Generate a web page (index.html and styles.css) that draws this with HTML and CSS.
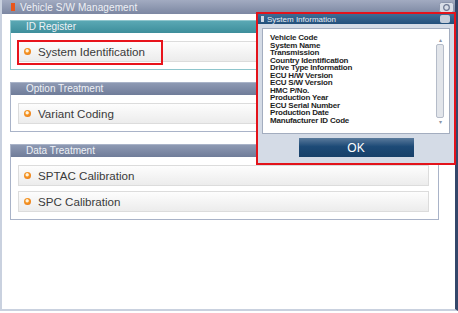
FILE: index.html
```html
<!DOCTYPE html>
<html lang="en">
<head>
  <meta charset="UTF-8">
  <title>Vehicle S/W Management</title>
  <link rel="stylesheet" href="styles.css">
</head>
<body>
  <div class="window">
    <div class="titlebar">
      <span class="app-icon"></span>
      <span class="title">Vehicle S/W Management</span>
      <span class="help-btn">
        <svg width="15" height="11" viewBox="0 0 15 11"><rect x="0.5" y="0.5" width="14" height="10" rx="2" fill="#d9dee8" stroke="#8d97ae"/><circle cx="7.5" cy="5.5" r="2.8" fill="none" stroke="#6a7590" stroke-width="1.2"/></svg>
      </span>
    </div>

    <div class="content">
      <div class="panel panel-teal">
        <div class="panel-header">ID Register</div>
        <div class="panel-body">
          <div class="row selected"><span class="bullet"></span>System Identification</div>
        </div>
      </div>

      <div class="panel">
        <div class="panel-header">Option Treatment</div>
        <div class="panel-body">
          <div class="row"><span class="bullet"></span>Variant Coding</div>
        </div>
      </div>

      <div class="panel">
        <div class="panel-header">Data Treatment</div>
        <div class="panel-body">
          <div class="row"><span class="bullet"></span>SPTAC Calibration</div>
          <div class="row"><span class="bullet"></span>SPC Calibration</div>
        </div>
      </div>
    </div>

    <div class="dialog">
      <div class="dialog-title">
        <span class="dialog-icon"></span>System Information
        <span class="dialog-close"></span>
      </div>
      <div class="dialog-body">
        <div class="list">
          <ul class="items">
            <li>Vehicle Code</li>
            <li>System Name</li>
            <li>Transmission</li>
            <li>Country Identification</li>
            <li>Drive Type Information</li>
            <li>ECU H/W Version</li>
            <li>ECU S/W Version</li>
            <li>HMC P/No.</li>
            <li>Production Year</li>
            <li>ECU Serial Number</li>
            <li>Production Date</li>
            <li>Manufacturer ID Code</li>
          </ul>
          <div class="scrollbar">
            <span class="arrow">&#9652;</span>
            <span class="thumb"></span>
            <span class="arrow">&#9662;</span>
          </div>
        </div>
        <button class="ok-btn">OK</button>
      </div>
    </div>
  </div>
</body>
</html>
```

FILE: styles.css
```css
body {
  margin: 0;
  padding: 0;
  width: 458px;
  height: 313px;
  background-color: #ffffff;
  font-family: 'Liberation Sans', Arial, sans-serif;
  overflow: hidden;
}

.window {
  position: relative;
  width: 453px;
  height: 309px;
  border-left: 2px solid #c9d1df;
  border-right: 3px solid #34476a;
  border-bottom: 2px solid #c9d1df;
  background-color: #ffffff;
}

.titlebar {
  height: 14px;
  display: flex;
  align-items: center;
  padding-left: 9px;
  background: linear-gradient(#a2abc1, #7c87a2);
}

.app-icon {
  width: 4px;
  height: 8px;
  background-color: #e8561c;
  margin-right: 5px;
}

.title {
  color: #eef0f5;
  font-size: 10px;
  letter-spacing: 0.1px;
}

.help-btn {
  margin-left: auto;
  margin-right: 1px;
  display: flex;
}

.content {
  padding: 6px 16px 0 8px;
}

.panel {
  border: 1px solid #a9b3c8;
  margin-bottom: 12px;
}

.panel-header {
  height: 12px;
  line-height: 12px;
  padding-left: 15px;
  font-size: 10px;
  color: #eef1f6;
  background: linear-gradient(#8d99b3, #6f7c99);
}

.panel-teal {
  border-color: #8fc6cd;
}

.panel-teal .panel-header {
  background: linear-gradient(#5aa8b4, #3d8e9b);
}

.panel-body {
  display: flex;
  flex-direction: column;
  gap: 5px;
  padding: 8px 9px 7px 7px;
}

.row {
  position: relative;
  height: 21px;
  display: flex;
  align-items: center;
  padding-left: 5px;
  font-size: 11.6px;
  color: #3a3a3a;
  border: 1px solid #dcdcdc;
  background: linear-gradient(#fdfdfd, #ececec);
  box-sizing: border-box;
}

/* red highlight box drawn over the selected row */
.row.selected::after {
  content: "";
  position: absolute;
  left: -2px;
  top: -2px;
  width: 142px;
  height: 21px;
  border: 2px solid #e8141c;
}

.bullet {
  width: 7px;
  height: 7px;
  border-radius: 50%;
  margin-right: 7px;
  background: radial-gradient(circle at 45% 40%, #fff3e0 0 1.2px, #f59a2a 2px, #e66a08);
}

.dialog {
  position: absolute;
  left: 254px;
  top: 12px;
  width: 196px;
  height: 149px;
  border: 2px solid #e3131b;
  background-color: #d4dbe6;
  display: flex;
  flex-direction: column;
}

.dialog-title {
  height: 10px;
  display: flex;
  align-items: center;
  padding-left: 3px;
  font-size: 8px;
  color: #e6ecf4;
  background: linear-gradient(#3e6c95, #23507c);
}

.dialog-icon {
  width: 3px;
  height: 6px;
  margin-right: 3px;
  background-color: #cfd8e4;
}

.dialog-close {
  margin-left: auto;
  margin-right: 4px;
  width: 10px;
  height: 8px;
  border-radius: 2px;
  background-color: #c5cedb;
}

.dialog-body {
  flex: 1;
  display: flex;
  flex-direction: column;
  align-items: center;
  padding: 4px 4px 0 4px;
}

.list {
  width: 188px;
  height: 106px;
  box-sizing: border-box;
  border: 1px solid #a3adbf;
  background-color: #ffffff;
  display: flex;
}

.items {
  list-style: none;
  margin: 0;
  padding: 5px 0 0 7px;
  flex: 1;
}

.items li {
  font-size: 8px;
  font-weight: bold;
  line-height: 7.5px;
  color: #1e1e1e;
  letter-spacing: -0.2px;
}

.scrollbar {
  width: 8px;
  margin: 8px 5px 8px 0;
  display: flex;
  flex-direction: column;
  align-items: center;
}

.arrow {
  font-size: 6px;
  line-height: 6px;
  color: #8a93a5;
}

.thumb {
  flex: 1;
  width: 6px;
  margin: 1px 0;
  border: 1px solid #b5bcc9;
  border-radius: 2px;
  background-color: #e2e5ea;
}

.ok-btn {
  margin-top: 4px;
  width: 115px;
  height: 19px;
  border: none;
  padding: 0;
  font-family: 'Liberation Sans', Arial, sans-serif;
  font-size: 12px;
  color: #ffffff;
  background: linear-gradient(#5a7a9c, #1d4a76 45%, #174069);
}
```
